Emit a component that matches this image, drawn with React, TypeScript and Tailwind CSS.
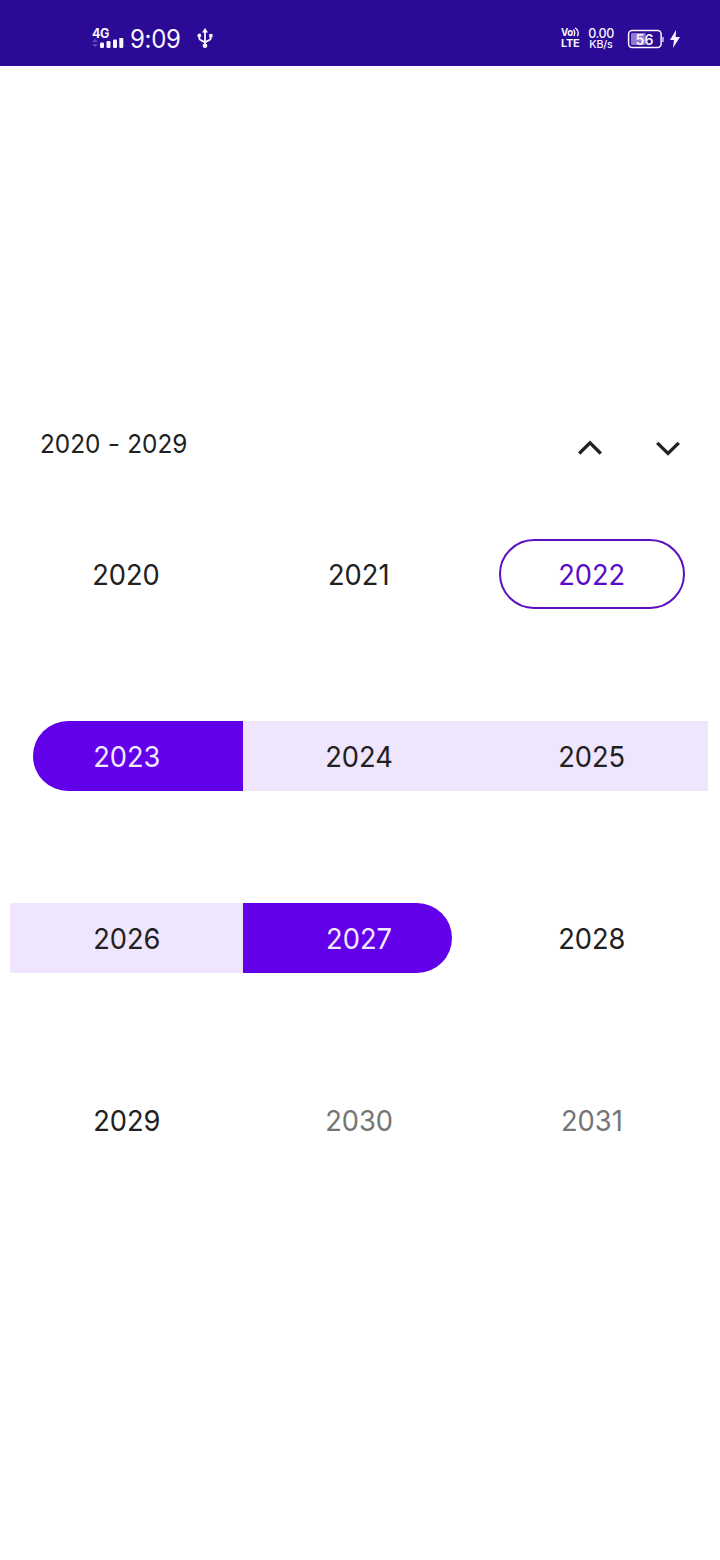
import React from "react";
import clsx from "clsx";

type Kind = "plain" | "today" | "start" | "range" | "end" | "muted";

const years: { year: number; kind: Kind }[] = [
  { year: 2020, kind: "plain" },
  { year: 2021, kind: "plain" },
  { year: 2022, kind: "today" },
  { year: 2023, kind: "start" },
  { year: 2024, kind: "range" },
  { year: 2025, kind: "range" },
  { year: 2026, kind: "range" },
  { year: 2027, kind: "end" },
  { year: 2028, kind: "plain" },
  { year: 2029, kind: "plain" },
  { year: 2030, kind: "muted" },
  { year: 2031, kind: "muted" },
];

const kindStyles: Record<Kind, string> = {
  plain: "text-[#212121]",
  today: "ml-[23.5px] mr-[22.5px] rounded-full border-2 border-[#5a0fc0] text-[#5b0bc8]",
  start: "ml-[23px] pr-[23px] rounded-l-full bg-[#6200ea] text-[#f3e9ff]",
  range: "bg-[#efe5fd] text-[#212121]",
  end: "mr-[23px] pl-[23px] rounded-r-full bg-[#6200ea] text-[#f3e9ff]",
  muted: "text-[#757575]",
};

function YearCell({ year, kind }: { year: number; kind: Kind }) {
  return (
    <div className="h-[182px]">
      <button
        className={clsx(
          "flex h-[70px] items-center justify-center",
          kind === "plain" || kind === "range" || kind === "muted" ? "w-full" : "",
          kind === "today" ? "w-[186.5px]" : "",
          kind === "start" || kind === "end" ? "w-[209.67px]" : "",
          kindStyles[kind],
        )}
      >
        <span className="mt-px inline-block origin-center scale-x-[0.94] text-[29px] leading-none font-normal">{year}</span>
      </button>
    </div>
  );
}

function StatusBar() {
  return (
    <header className="flex h-[66px] items-start justify-between bg-[#2b0a96] pt-[26px] pr-[39px] pl-[92px] text-[#f8f5ff]">
      <div className="flex">
        <div className="flex w-[33px] flex-col">
          <span className="h-[12px] text-[12.5px] leading-[15px] font-bold tracking-[-0.5px]">4G</span>
          <svg className="-ml-px" width="33" height="11" viewBox="0 0 33 11" fill="currentColor">
            <path d="M1 4 4 .8 7 4ZM1 6 4 9.2 7 6Z" opacity=".25" />
            <rect x="9" y="4.5" width="4" height="5.5" rx="1.2" />
            <rect x="15.5" y="3" width="4" height="7" rx="1.2" />
            <rect x="22" y="1.5" width="4" height="8.5" rx="1.2" />
            <rect x="28.3" y="-.5" width="4" height="10.5" rx="1.2" />
          </svg>
        </div>
        <span className="ml-[5px] w-[53px] origin-left scale-x-[0.96] text-[25px] leading-[27px] tracking-[-0.3px] font-normal">9:09</span>
        <svg className="ml-[14px] mt-[2px]" width="16" height="21" viewBox="0 0 16 21" fill="currentColor">
          <path d="M8 0 11 4.5H5Z" />
          <circle cx="8" cy="17.8" r="2.3" />
          <circle cx="2.3" cy="7.5" r="1.9" />
          <rect x="12.2" y="6" width="3.3" height="3.3" />
          <path d="M8 3V17M8 14.4 3.2 11.8Q2.3 11.2 2.3 10V8M8 14.4 12.8 11.8Q13.7 11.2 13.7 10V8" fill="none" stroke="currentColor" strokeWidth="1.8" />
        </svg>
      </div>
      <div className="flex">
        <div className="flex w-[20px] flex-col pt-px font-bold">
          <div className="flex h-[11px] items-start">
            <span className="w-[13px] origin-left scale-x-[0.88] text-[11px] leading-[11px] tracking-[-0.3px]">Vo</span>
            <svg className="-ml-px shrink-0" width="7" height="10" viewBox="0 0 7 10" fill="none" stroke="currentColor" strokeWidth="1.4">
              <path d="M.4 2.4Q2.6 5.1 1 8.9M2.2 .8Q6.8 4.6 4.4 9.2" />
            </svg>
          </div>
          <span className="text-[11px] leading-[11px] tracking-[-0.3px]">LTE</span>
        </div>
        <div className="ml-[5px] flex w-[30px] flex-col items-center font-medium">
          <span className="h-[11px] text-[12.5px] leading-[15px] tracking-[-0.4px]">0.00</span>
          <span className="text-[10.7px] leading-[15px] tracking-[-0.2px]">KB/s</span>
        </div>
        <svg className="ml-[11px] mt-[3px]" width="37" height="20" viewBox="0 0 37 20" fill="none">
          <rect x="1.6" y="1.5" width="32.5" height="17" rx="3.5" stroke="currentColor" strokeWidth="1.5" />
          <path d="M5.2 4H18.5V16H5.2Q4 16 4 14.5V5.5Q4 4 5.2 4Z" fill="#8f7ace" />
          <path d="M36 8V13" stroke="currentColor" strokeWidth="1.2" />
          <text x="17.5" y="15.5" textAnchor="middle" fontFamily="Inter, sans-serif" fontSize="14" fontWeight="600" fill="currentColor">56</text>
        </svg>
        <svg className="ml-[5px] mt-[4px]" width="12" height="18" viewBox="0 0 12 18" fill="currentColor">
          <path d="M7 0 1 10H5L4 18 11 7H6.7Z" />
        </svg>
      </div>
    </header>
  );
}

export default function App() {
  return (
    <div className="h-[1560px] w-[720px] overflow-hidden bg-white font-[Inter,sans-serif]">
      <StatusBar />
      <main className="pt-[350px]">
        <div className="flex h-[123px] items-start justify-between pr-[39px] pl-[40px]">
          <h1 className="mt-[14px] origin-left scale-x-[0.93] text-[26.2px] leading-[28px] font-normal text-[#212121]">
            2020<span className="mx-[1px] inline-block scale-x-[1.1]">&nbsp;-&nbsp;</span>2029
          </h1>
          <div className="mt-[23px] flex gap-[52px]">
            <button aria-label="Previous years">
              <svg width="26" height="18" viewBox="0 0 26 18" fill="none" stroke="#212121" strokeWidth="3.3">
                <path d="M2.2 14.5 13 3.8 23.8 14.5" />
              </svg>
            </button>
            <button aria-label="Next years">
              <svg width="26" height="18" viewBox="0 0 26 18" fill="none" stroke="#212121" strokeWidth="3.3">
                <path d="M2.2 3.8 13 14.5 23.8 3.8" />
              </svg>
            </button>
          </div>
        </div>
        <section className="mr-[12px] ml-[10px] grid grid-cols-3">
          {years.map((item) => (
            <YearCell key={item.year} {...item} />
          ))}
        </section>
      </main>
    </div>
  );
}
